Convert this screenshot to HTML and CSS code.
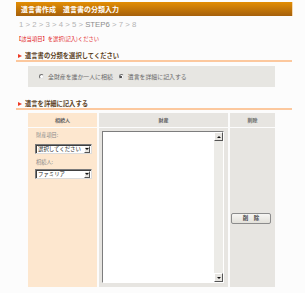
FILE: index.html
```html
<!DOCTYPE html>
<html lang="ja">
<head>
    <meta charset="UTF-8">
    <meta name="viewport" content="width=device-width, initial-scale=1.0">
    <title>遺言書作成</title>
    <link rel="stylesheet" href="styles.css">
</head>
<body>
    <main class="page">
        <h1 class="title">遺言書作成　遺言書の分類入力</h1>
        <p class="steps">1 &gt; 2 &gt; 3 &gt; 4 &gt; 5 &gt; <span class="now">STEP6</span> &gt; 7 &gt; 8</p>
        <p class="note">【該当項目】を選択(記入)ください</p>

        <h2 class="sec">遺言書の分類を選択してください</h2>
        <section class="choice">
            <label class="radio"><span class="dot"></span>全財産を誰か一人に相続</label>
            <label class="radio"><span class="dot on"></span>遺言を詳細に記入する</label>
        </section>

        <h2 class="sec">遺言を詳細に記入する</h2>
        <section class="grid">
            <div class="head peach">相続人</div>
            <div class="head">財産</div>
            <div class="head">削除</div>

            <div class="cell peach heirs">
                <p class="lbl">財産項目:</p>
                <div class="select"><span>選択してください</span><i class="arrow"></i></div>
                <p class="lbl">相続人:</p>
                <div class="select"><span>ファミリア</span><i class="arrow"></i></div>
            </div>
            <div class="cell assets">
                <div class="area">
                    <div class="txt"></div>
                    <div class="bar">
                        <i class="btn up"></i>
                        <i class="btn down"></i>
                    </div>
                </div>
            </div>
            <div class="cell del">
                <button class="delbtn">削　除</button>
            </div>
        </section>
    </main>
</body>
</html>
```
FILE: styles.css
```css
*{
    box-sizing: border-box;
}
body{
    margin: 0;
    background-color: #fcfcfc;
    font-family: "Noto Sans CJK JP", "Noto Sans", sans-serif;
    color: #555;
}
.page{
    width: 305px;
    padding: 2px 0 0 16px;
}
.title{
    margin: 0;
    width: 277px;
    height: 14px;
    padding-left: 5px;
    background: linear-gradient(#e38e04, #a5600c);
    border-right: 1px solid #f6d9b2;
    color: #fff;
    font-size: 7px;
    font-weight: bold;
    line-height: 14px;
}
.steps{
    margin: 5px 0 0 3px;
    font-family: "Liberation Sans", sans-serif;
    font-size: 7.8px;
    line-height: 8px;
    color: #b4b4b4;
}
.steps .now{
    color: #8c8c8c;
}
.note{
    margin: 6px 0 0;
    font-size: 5.3px;
    line-height: 8px;
    color: #e3262a;
}
.sec{
    margin: 8px 0 0;
    width: 276px;
    display: flex;
    align-items: center;
    gap: 3px;
    font-size: 6.3px;
    line-height: 9px;
    color: #5b3f1c;
    border-bottom: 2px solid #fcc89e;
}
.sec::before{
    content: "";
    margin-left: 2px;
    border-left: 4px solid #ee3b26;
    border-top: 2.5px solid transparent;
    border-bottom: 2.5px solid transparent;
}
.choice{
    margin: 4px 0 0 12px;
    width: 247px;
    height: 21px;
    padding-left: 11px;
    background-color: #e7e6e2;
    display: flex;
    align-items: center;
    gap: 6px;
}
.radio{
    display: flex;
    align-items: center;
    gap: 4px;
    font-size: 5.9px;
    color: #6a6a6a;
}
.dot{
    width: 5px;
    height: 5px;
    border-radius: 50%;
    background-color: #fff;
    border: 1px solid;
    border-color: #707070 #e0e0e0 #e0e0e0 #707070;
    display: flex;
    align-items: center;
    justify-content: center;
}
.dot.on::after{
    content: "";
    width: 2px;
    height: 2px;
    border-radius: 50%;
    background-color: #222;
}
.choice + .sec{
    margin-top: 12px;
}
.grid{
    margin: 3px 0 0 12px;
    width: 247px;
    display: grid;
    grid-template-columns: 69px 129px 45px;
    grid-template-rows: 14px 159px;
    gap: 1px 2px;
}
.head{
    background-color: #e7e5e1;
    font-size: 5px;
    font-weight: bold;
    line-height: 14px;
    text-align: center;
    color: #666;
}
.cell{
    background-color: #e7e5e1;
}
.peach{
    background-color: #fde7cf;
}
.heirs{
    padding: 3px 0 0 7px;
}
.lbl{
    margin: 0;
    padding-left: 1px;
    font-size: 5.2px;
    line-height: 8px;
    color: #8a8a8a;
}
.select{
    margin: 5px 0 4px;
    width: 57px;
    height: 10px;
    background-color: #fff;
    border: 1px solid;
    border-color: #7a7a7a #dcdcdc #dcdcdc #7a7a7a;
    box-shadow: inset 1px 1px 0 #404040;
    display: flex;
    align-items: center;
    justify-content: space-between;
    padding: 0 1px 0 2px;
    font-size: 5.4px;
    color: #222;
}
.select + .lbl + .select{
    margin-top: 3px;
}
.arrow{
    width: 6px;
    height: 7px;
    background-color: #e7e5e1;
    border: 1px solid;
    border-color: #fff #555 #555 #fff;
    display: flex;
    align-items: center;
    justify-content: center;
}
.arrow::after{
    content: "";
    border-top: 2px solid #111;
    border-left: 2px solid transparent;
    border-right: 2px solid transparent;
}
.assets{
    padding: 3px 4px 4px 3px;
}
.area{
    height: 100%;
    display: flex;
    border: 1px solid;
    border-color: #7d7d7d #fff #fff #7d7d7d;
    box-shadow: inset 1px 1px 0 #3a3a3a;
}
.txt{
    flex: 1;
    background-color: #fff;
}
.bar{
    width: 9px;
    background-color: #ecebe7;
    display: flex;
    flex-direction: column;
    justify-content: space-between;
}
.btn{
    height: 9px;
    background-color: #e7e5e1;
    border: 1px solid;
    border-color: #fff #555 #555 #fff;
    display: flex;
    align-items: center;
    justify-content: center;
}
.btn.up::after{
    content: "";
    border-bottom: 2px solid #111;
    border-left: 2px solid transparent;
    border-right: 2px solid transparent;
}
.btn.down::after{
    content: "";
    border-top: 2px solid #111;
    border-left: 2px solid transparent;
    border-right: 2px solid transparent;
}
.del{
    padding: 73px 0 0 1px;
}
.delbtn{
    width: 40px;
    height: 11px;
    padding: 0;
    background: linear-gradient(#f7f6f3, #e2e0da);
    border: 1px solid #8c8c8c;
    border-radius: 2px;
    font-family: "Noto Sans CJK JP", sans-serif;
    font-size: 5.5px;
    font-weight: bold;
    line-height: 9px;
    color: #444;
}
```
